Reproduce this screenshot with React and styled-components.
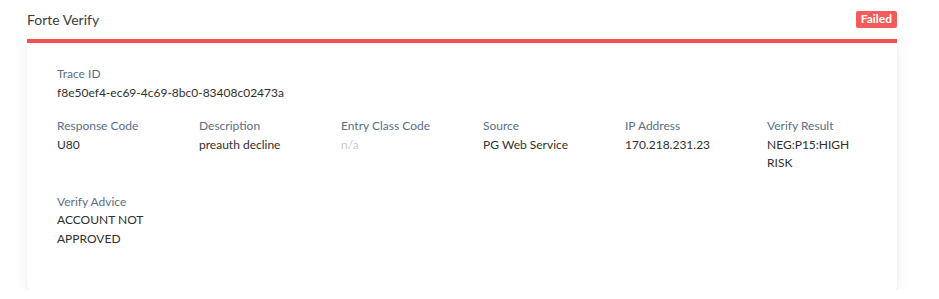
import React from 'react';
import styled, { createGlobalStyle } from 'styled-components';

const GlobalStyle = createGlobalStyle`
    body {
        margin: 0;
        background: #fff;
        font-family: Lato, "Open Sans", sans-serif;
    }
`;

const Page = styled.div`
    padding: 0 42px 0 27px;
    width: 870px;
`;

const Header = styled.div`
    display: flex;
    align-items: center;
    justify-content: space-between;
    height: 39px;
`;

const Title = styled.h3`
    margin: 0;
    font-size: 14px;
    font-weight: 400;
    color: #3d3d3d;
`;

const Badge = styled.span`
    background: #f45b5b;
    color: #fff;
    font-size: 12px;
    font-weight: 700;
    padding: 1px 5px 2px;
    border-radius: 2px;
    line-height: 14px;
`;

const Card = styled.div`
    border-top: 4px solid #f25252;
    background: #fff;
    border-radius: 0 0 4px 4px;
    box-shadow: 0 1px 2px rgba(60, 70, 110, 0.08), 0 3px 14px rgba(60, 70, 110, 0.08);
    padding: 22px 30px 42px;
`;

const Grid = styled.div`
    display: grid;
    grid-template-columns: repeat(6, 102px);
    column-gap: 40px;
    row-gap: ${(p) => p.$gap || 20}px;
    margin-bottom: ${(p) => p.$after || 0}px;
`;

const Field = styled.div`
    grid-column: ${(p) => (p.$wide ? '1 / -1' : 'auto')};
    font-size: 12px;
    line-height: 18.5px;
`;

const Label = styled.div`
    color: #5b6e87;
    white-space: nowrap;
`;

const Value = styled.div`
    color: ${(p) => (p.$muted ? '#c8c8c8' : '#2f2f2f')};
`;

const fields = [
    { label: 'Response Code', value: 'U80' },
    { label: 'Description', value: 'preauth decline' },
    { label: 'Entry Class Code', value: 'n/a', muted: true },
    { label: 'Source', value: 'PG Web Service' },
    { label: 'IP Address', value: '170.218.231.23' },
    { label: 'Verify Result', value: 'NEG:P15:HIGH RISK' },
    { label: 'Verify Advice', value: 'ACCOUNT NOT APPROVED' },
];

function App() {
    return (
        <>
            <GlobalStyle />
            <Page>
                <Header>
                    <Title>Forte Verify</Title>
                    <Badge>Failed</Badge>
                </Header>
                <Card>
                    <Grid $after={15}>
                        <Field $wide>
                            <Label>Trace ID</Label>
                            <Value>f8e50ef4-ec69-4c69-8bc0-83408c02473a</Value>
                        </Field>
                    </Grid>
                    <Grid $gap={20}>
                        {fields.map((f) => (
                            <Field key={f.label}>
                                <Label>{f.label}</Label>
                                <Value $muted={f.muted}>{f.value}</Value>
                            </Field>
                        ))}
                    </Grid>
                </Card>
            </Page>
        </>
    );
}

export default App;
